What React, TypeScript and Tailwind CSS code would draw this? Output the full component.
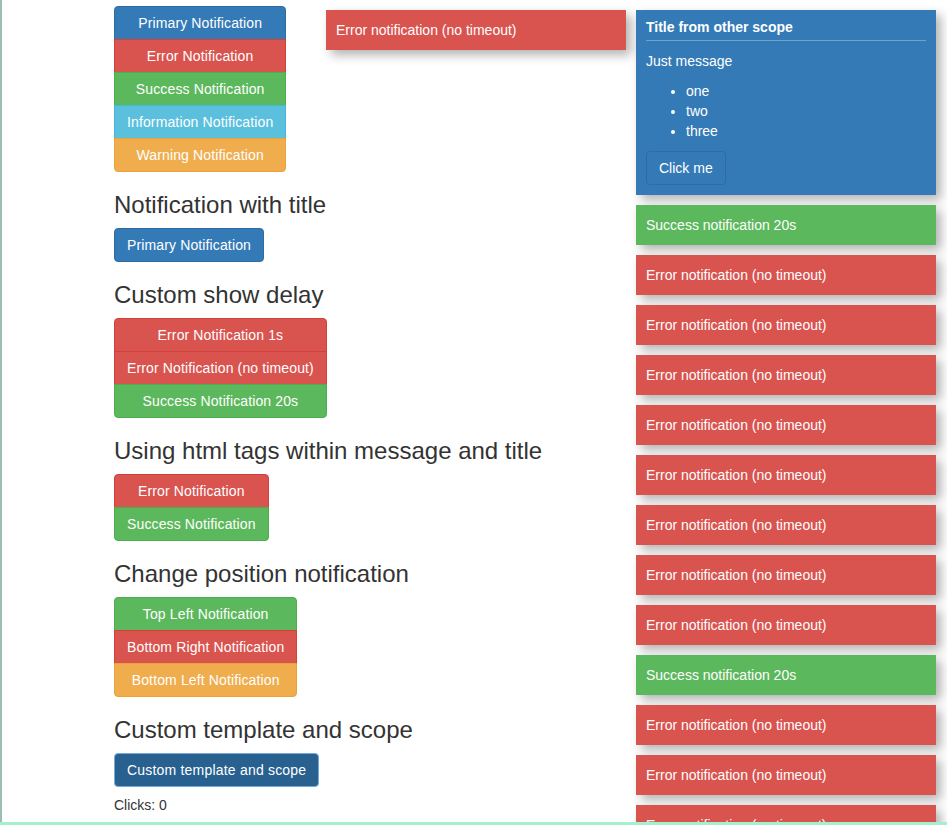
import React from 'react';

type Variant = 'primary' | 'danger' | 'success' | 'info' | 'warning';

const btnColors: Record<Variant, string> = {
  primary: 'bg-[#337ab7] border-[#2e6da4]',
  danger: 'bg-[#d9534f] border-[#d43f3a]',
  success: 'bg-[#5cb85c] border-[#4cae4c]',
  info: 'bg-[#5bc0de] border-[#46b8da]',
  warning: 'bg-[#f0ad4e] border-[#eea236]',
};

const BtnGroup: React.FC<{ items: { label: string; v: Variant }[] }> = ({ items }) => (
  <div className="inline-flex flex-col">
    {items.map((it, i) => (
      <button
        key={it.label}
        className={`${btnColors[it.v]} border text-white text-[14px] leading-5 tracking-[0.13px] px-3 py-[6px] text-center whitespace-nowrap ${
          i > 0 ? '-mt-px' : ''
        } ${i === 0 ? 'rounded-t-[4px]' : ''} ${i === items.length - 1 ? 'rounded-b-[4px]' : ''}`}
      >
        {it.label}
      </button>
    ))}
  </div>
);

const Heading: React.FC<{ children: React.ReactNode }> = ({ children }) => (
  <h3 className="text-[24px] leading-[26px] text-[#333] mt-5 mb-[10px] font-normal">{children}</h3>
);

const Notice: React.FC<{ v: 'danger' | 'success'; text: string }> = ({ v, text }) => (
  <div
    className={`w-[300px] p-[10px] text-white text-[14px] leading-5 shadow-[5px_5px_10px_rgba(0,0,0,0.3)] ${
      v === 'danger' ? 'bg-[#d9534f]' : 'bg-[#5cb85c]'
    }`}
  >
    {text}
  </div>
);

const ERR = 'Error notification (no timeout)';
const OK = 'Success notification 20s';

export default function App() {
  const rightStack: { v: 'danger' | 'success'; text: string }[] = [
    { v: 'success', text: OK },
    ...Array.from({ length: 8 }, () => ({ v: 'danger' as const, text: ERR })),
    { v: 'success', text: OK },
    { v: 'danger', text: ERR },
    { v: 'danger', text: ERR },
    { v: 'danger', text: ERR },
  ];

  return (
    <div
      className="relative h-[825px] w-[947px] overflow-hidden bg-white flex flex-col"
      style={{ fontFamily: '"Liberation Sans", Arial, Helvetica, sans-serif' }}
    >
      <div className="flex-1 flex border-l-2 border-[#9dbdb0] overflow-hidden relative">
        <div className="absolute -left-[2px] top-0 h-[33px] w-[2px] bg-[#1a2a24]" />
        <div className="pl-[112px] pt-[6px] flex flex-col items-start">
          <BtnGroup
            items={[
              { label: 'Primary Notification', v: 'primary' },
              { label: 'Error Notification', v: 'danger' },
              { label: 'Success Notification', v: 'success' },
              { label: 'Information Notification', v: 'info' },
              { label: 'Warning Notification', v: 'warning' },
            ]}
          />
          <Heading>Notification with title</Heading>
          <BtnGroup items={[{ label: 'Primary Notification', v: 'primary' }]} />
          <Heading>Custom show delay</Heading>
          <BtnGroup
            items={[
              { label: 'Error Notification 1s', v: 'danger' },
              { label: 'Error Notification (no timeout)', v: 'danger' },
              { label: 'Success Notification 20s', v: 'success' },
            ]}
          />
          <Heading>Using html tags within message and title</Heading>
          <BtnGroup
            items={[
              { label: 'Error Notification', v: 'danger' },
              { label: 'Success Notification', v: 'success' },
            ]}
          />
          <Heading>Change position notification</Heading>
          <BtnGroup
            items={[
              { label: 'Top Left Notification', v: 'success' },
              { label: 'Bottom Right Notification', v: 'danger' },
              { label: 'Bottom Left Notification', v: 'warning' },
            ]}
          />
          <Heading>Custom template and scope</Heading>
          <button className="bg-[#286090] border border-[#7aaad8] rounded-[4px] text-white text-[14px] leading-5 tracking-[0.2px] px-3 py-[6px]">
            Custom template and scope
          </button>
          <p className="mt-[8px] text-[14px] leading-5 text-[#333]">Clicks: 0</p>
        </div>

        {/* floating notifications */}
        <div className="absolute left-[324px] top-[10px]">
          <Notice v="danger" text={ERR} />
        </div>
        <div className="absolute left-[634px] top-[10px] flex flex-col gap-[10px]">
          <div className="w-[300px] bg-[#337ab7] text-white shadow-[5px_5px_10px_rgba(0,0,0,0.3)]">
            <h3 className="mx-[10px] mt-[10px] pb-[5px] text-[14px] leading-[1.1] font-bold border-b border-white/30">
              Title from other scope
            </h3>
            <div className="m-[10px] text-[14px] leading-5">
              <p className="mb-[10px]">Just message</p>
              <ul className="list-disc pl-10 mb-[10px]">
                <li>one</li>
                <li>two</li>
                <li>three</li>
              </ul>
              <button className="bg-[#337ab7] border border-[#2e6da4] rounded-[4px] text-white text-[14px] leading-5 px-3 py-[6px]">
                Click me
              </button>
            </div>
          </div>
          {rightStack.map((n, i) => (
            <Notice key={i} v={n.v} text={n.text} />
          ))}
        </div>
      </div>
      <div className="h-[3px] bg-[#a3f0cc] relative z-10" />
    </div>
  );
}
